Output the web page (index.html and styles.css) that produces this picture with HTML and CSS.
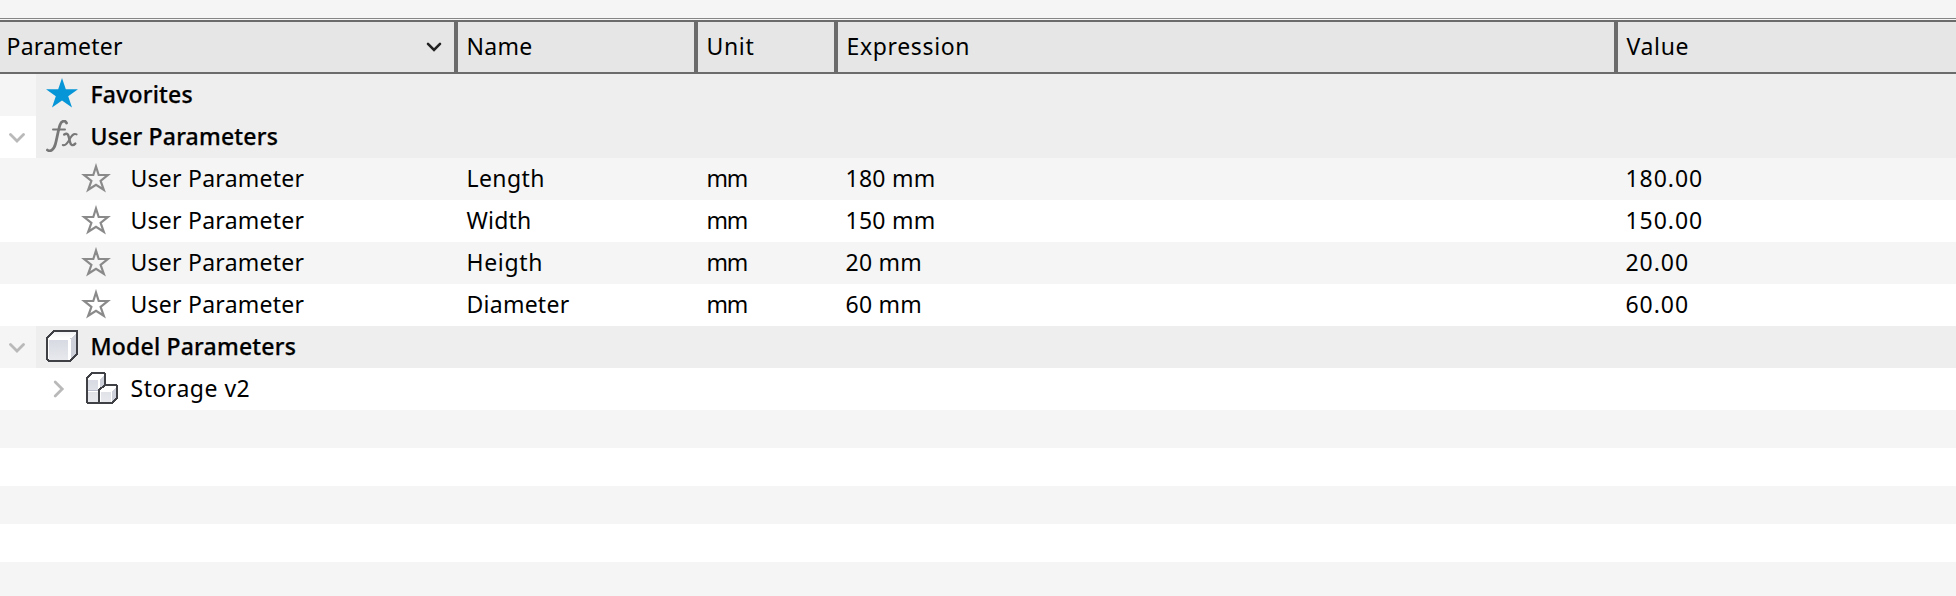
FILE: index.html
```
<!DOCTYPE html>
<html lang="en">
<head>
<meta charset="utf-8">
<title>Parameters</title>
<link rel="stylesheet" href="styles.css">
</head>
<body>
<svg class="defs" width="0" height="0" aria-hidden="true">
  <defs>
    <linearGradient id="face" x1="0" y1="0" x2="0" y2="1"><stop offset="0" stop-color="#d7dae2"/><stop offset="1" stop-color="#e7e9ed"/></linearGradient>
    <linearGradient id="top" x1="0" y1="0" x2="0" y2="1"><stop offset="0" stop-color="#f0f1f3"/><stop offset="1" stop-color="#ffffff"/></linearGradient>
    <symbol id="star" viewBox="0 0 32 32"><path d="M16 3.5 18.7 12H27.8L20.6 17.8 23.8 26.8 16 21.8 8.2 26.8 11.4 17.8 4.2 12H13.3Z" fill="none" stroke="#8a8a8a" stroke-width="2.2"/></symbol>
    <symbol id="down" viewBox="0 0 16 10"><path d="M1.5 1.5 8 8 14.5 1.5" fill="none" stroke="#b9b9b9" stroke-width="2.8" stroke-linecap="round"/></symbol>
  </defs>
</svg>
<div class="toolbar"></div>
<div class="table">
  <div class="header">
    <div class="th sorted"><span>Parameter</span><svg class="sort" width="16" height="10" viewBox="0 0 16 10"><path d="M2 1.9 8 7.9 14 1.9" fill="none" stroke="#222" stroke-width="2.6" stroke-linecap="round"/></svg></div>
    <div class="th">Name</div>
    <div class="th loose">Unit</div>
    <div class="th loose">Expression</div>
    <div class="th loose">Value</div>
  </div>

  <div class="group">
    <div class="gutter shaded"></div>
    <div class="title">
      <svg class="icon" viewBox="0 0 32 32"><path d="M16 0 19.8 11.2H32L22.2 18.2 26 29.4 16 22.5 6 29.4 9.8 18.2 0 11.2H12.2Z" fill="#0696d7"/></svg>
      <span>Favorites</span>
    </div>
  </div>
  <div class="group">
    <div class="gutter"><svg class="caret" width="16" height="10"><use href="#down"/></svg></div>
    <div class="title">
      <svg class="icon" viewBox="0 0 32 32" fill="none" stroke="#777" stroke-width="2" stroke-linecap="round">
        <path d="M20.5 3C19.4.2 15.6.4 14.1 4.6 12.4 9.4 11 18 9.4 24.2 7.8 30.2 4 32 1.4 30" stroke-width="2.8"/>
        <path d="M7 9.5H19"/>
        <path d="M18.2 14.6C21 12.6 22.2 14 22.9 17.5L24.1 22.2C24.7 25.4 27 26.1 29.3 23.6" stroke-width="2.4"/>
        <path d="M30.6 14.4C27.3 12.9 25.4 16.1 23.5 19.4 21.2 23.4 19.4 26.1 16.8 25"/>
      </svg>
      <span>User Parameters</span>
    </div>
  </div>

  <div class="row shaded">
    <div class="cell param"><svg class="icon fav"><use href="#star"/></svg><span>User Parameter</span></div>
    <div class="cell mid">Length</div><div class="cell unit">mm</div><div class="cell expr">180 mm</div><div class="cell num">180.00</div>
  </div>
  <div class="row">
    <div class="cell param"><svg class="icon fav"><use href="#star"/></svg><span>User Parameter</span></div>
    <div class="cell snug">Width</div><div class="cell unit">mm</div><div class="cell expr">150 mm</div><div class="cell num">150.00</div>
  </div>
  <div class="row shaded">
    <div class="cell param"><svg class="icon fav"><use href="#star"/></svg><span>User Parameter</span></div>
    <div class="cell loose">Heigth</div><div class="cell unit">mm</div><div class="cell expr">20 mm</div><div class="cell num">20.00</div>
  </div>
  <div class="row">
    <div class="cell param"><svg class="icon fav"><use href="#star"/></svg><span>User Parameter</span></div>
    <div class="cell">Diameter</div><div class="cell unit">mm</div><div class="cell expr">60 mm</div><div class="cell num">60.00</div>
  </div>

  <div class="group">
    <div class="gutter shaded"><svg class="caret" width="16" height="10"><use href="#down"/></svg></div>
    <div class="title">
      <svg class="icon solid" viewBox="0 0 32 32">
        <path d="M1 8 8 1H31V24L24 31H3L1 29Z" fill="#fff"/>
        <path d="M8 1H31L24 8H2Z" fill="url(#top)"/>
        <path d="M3 10H22V30H3Z" fill="url(#face)"/>
        <path d="M24.5 8.5 31 3V24L24.5 30Z" fill="#ced1da"/>
        <path d="M1 8 8 1H31V24L24 31H3L1 29Z" fill="none" stroke="#3f4045" stroke-width="2"/>
      </svg>
      <span>Model Parameters</span>
    </div>
  </div>
  <div class="row">
    <div class="cell param child">
      <svg class="expander" width="12" height="18" viewBox="0 0 12 18"><path d="M2.2 2 9.2 9 2.2 16" fill="none" stroke="#b9b9b9" stroke-width="2.8" stroke-linecap="round"/></svg>
      <svg class="icon solid" viewBox="0 0 32 32">
        <path d="M1 6 6 1H18L19 2V13H30L31 14V26L26 31H2L1 30Z" fill="#fff"/>
        <path d="M2 8H12V18H2ZM2 20H12V30H2ZM15 20H25V30H15Z" fill="url(#face)"/>
        <path d="M14 7 18 3V13L14 17ZM26 19 30 15V26L26 30Z" fill="#ced1da"/>
        <path d="M2 18.5H12" stroke="#b9bdc9"/>
        <path d="M1 6 6 1H18L19 2V13H30L31 14V26L26 31H2L1 30ZM19 13 13 18V31" fill="none" stroke="#3f4045" stroke-width="2"/>
      </svg>
      <span class="roomy">Storage v2</span>
    </div>
  </div>

  <div class="filler"></div>
</div>
</body>
</html>
```
FILE: styles.css
```
* { box-sizing: border-box; }
html, body { height: 100%; }
body {
  margin: 0;
  display: flex;
  flex-direction: column;
  overflow: hidden;
  background: #fff;
  color: #000;
  font: 23px/30px "Noto Sans", sans-serif;
  letter-spacing: 0.25px;
  white-space: nowrap;
}
.defs { position: absolute; }
svg { display: block; flex: none; }

.toolbar {
  height: 19px;
  flex: none;
  background: #f5f5f5;
  border-bottom: 1px solid #858585;
}
.table {
  flex: 1;
  display: flex;
  flex-direction: column;
  border-top: 1px solid #f5f5f5;
}
.header, .row {
  display: grid;
  grid-template-columns: 458px 240px 140px 780px 1fr;
  flex: none;
}
.header {
  height: 54px;
  background: #e6e6e6;
  border-top: 2px solid #6b6b6b;
  border-bottom: 2px solid #6b6b6b;
}
.th {
  display: flex;
  align-items: center;
  padding: 0 0 2px 8.5px;
  border-right: 4px solid #6b6b6b;
}
.th:last-child { border-right: 0; }
.sorted { justify-content: space-between; padding-left: 6.5px; padding-right: 12px; }
.sort { margin-top: 1px; }

.group, .row { height: 42px; }
.group { display: flex; flex: none; }
.gutter { width: 36px; display: flex; align-items: center; padding-left: 9px; }
.caret { margin-top: 1px; }
.title {
  flex: 1;
  display: flex;
  align-items: center;
  gap: 12.5px;
  padding: 0 0 2px 10px;
  background: #eee;
  font-weight: 500;
  letter-spacing: 0.2px;
  -webkit-text-stroke: 0.25px #000;
}
.icon { width: 32px; height: 32px; }
.solid { shape-rendering: crispEdges; }

.cell { display: flex; align-items: center; padding: 0 0 2px 8.5px; }
.param { padding-left: 80px; gap: 18.5px; }
.fav { margin-top: 2px; }
.child { padding-left: 53px; gap: 0; }
.child .icon { margin-left: 21px; margin-right: 12.5px; }
.expander { margin-top: 2px; }

.shaded { background: #f5f5f5; }
.snug { letter-spacing: 0.2px; }
.mid { letter-spacing: 0.4px; }
.roomy { letter-spacing: 0.5px; }
.loose { letter-spacing: 0.65px; }
.unit { letter-spacing: -1.3px; }
.num { letter-spacing: 0.95px; padding-left: 7.5px; }
.expr { padding-left: 7.5px; letter-spacing: 0.25px; }

.filler {
  flex: 1;
  background: repeating-linear-gradient(#f5f5f5 0 38px, #fff 38px 76px);
}
```
